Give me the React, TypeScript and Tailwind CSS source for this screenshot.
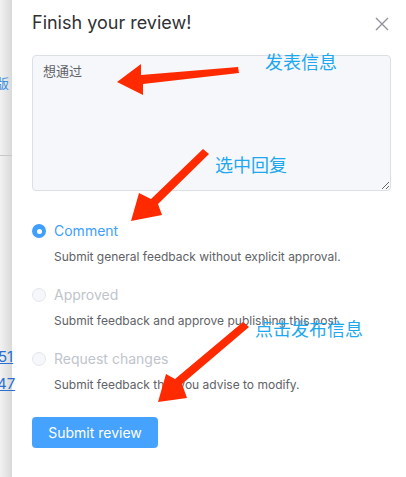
import { useState } from 'react';

interface ReviewOption {
  value: string;
  label: string;
  description: string;
  disabled?: boolean;
}

const options: ReviewOption[] = [
  { value: 'comment', label: 'Comment', description: 'Submit general feedback without explicit approval.' },
  { value: 'approved', label: 'Approved', description: 'Submit feedback and approve publishing this post.', disabled: true },
  { value: 'changes', label: 'Request changes', description: 'Submit feedback that you advise to modify.', disabled: true },
];

const font = { fontFamily: 'Inter, "Noto Sans CJK SC", sans-serif' };

export default function App() {
  const [selected, setSelected] = useState('comment');

  return (
    <div className="relative flex h-[477px] w-[406px] overflow-hidden bg-white" style={font}>
      {/* page behind the drawer */}
      <div className="relative w-3 shrink-0 bg-gradient-to-r from-[#f2f2f2] to-[#d9d9d9]">
        <span className="absolute left-[-4px] top-[77px] text-[13px] leading-none text-[#3f8fe0]">版</span>
        <div className="absolute left-0 top-[155px] h-px w-3 bg-[#c8c8c8]" />
        <span className="absolute left-[-2px] top-[349px] text-[15px] leading-none text-[#2a6fd1] underline">51</span>
        <span className="absolute left-[-3px] top-[376px] text-[15px] leading-none text-[#2a6fd1] underline">47</span>
      </div>

      <div className="flex-1 pl-5 pr-[15px] pt-[12px]">
        <div className="flex items-start justify-between">
          <h2 className="text-[18px] font-normal leading-[22px] text-[#303133]">Finish your review!</h2>
          <button className="mr-[2px] mt-[5px] text-[#909399]">
            <svg width="14" height="14" viewBox="0 0 14 14" fill="none" stroke="currentColor" strokeWidth="1.4">
              <path d="M1 1 13 13M13 1 1 13" />
            </svg>
          </button>
        </div>

        <textarea
          defaultValue="想通过"
          className="mt-[21px] block h-[136px] w-[359px] resize-y rounded border border-[#dcdfe6] bg-[#f5f7fa] px-[10px] py-[5px] text-[13px] leading-5 text-[#606266] outline-none"
        />

        <div className="mt-[31px] flex flex-col gap-[21px]">
          {options.map((opt) => {
            const checked = selected === opt.value;
            return (
              <label key={opt.value} className="block cursor-pointer" onClick={() => !opt.disabled && setSelected(opt.value)}>
                <div className="flex items-center gap-[8px]">
                  <span
                    className={
                      checked
                        ? 'flex h-[14px] w-[14px] items-center justify-center rounded-full bg-[#409eff]'
                        : 'h-[14px] w-[14px] rounded-full border border-[#e4e7ed] bg-[#f5f7fa]'
                    }
                  >
                    {checked && <span className="h-[5px] w-[5px] rounded-full bg-white" />}
                  </span>
                  <span className={`text-[14px] leading-[18px] ${opt.disabled ? 'text-[#c0c4cc]' : 'text-[#409eff]'}`}>
                    {opt.label}
                  </span>
                </div>
                <p className="ml-[22px] mt-[9px] text-[12px] leading-4 text-[#606266]">{opt.description}</p>
              </label>
            );
          })}
        </div>

        <button className="mt-[24px] h-[31px] w-[126px] rounded bg-[#46a2ff] text-[14px] text-white">Submit review</button>
      </div>

      {/* annotations over the screenshot */}
      <svg className="pointer-events-none absolute inset-0" width="406" height="477" viewBox="0 0 406 477">
        <g fill="#ff2a00">
          <path d="M238 67 L239 73 L143 84 L143 95 L117 82 L141 64 L141 75 Z" />
          <path d="M203 149 L209 154 L158 204 L162 215 L131 221 L139 193 L151 199 Z" />
          <path d="M243 322 L249 327 L182 384 L187 398 L158 402 L166 374 L175 379 Z" />
        </g>
      </svg>
      <span className="pointer-events-none absolute left-[265px] top-[53px] text-[18px] leading-5 text-[#1ea8f0]">发表信息</span>
      <span className="pointer-events-none absolute left-[215px] top-[156px] text-[18px] leading-5 text-[#1ea8f0]">选中回复</span>
      <span className="pointer-events-none absolute left-[255px] top-[320px] text-[18px] leading-5 text-[#1ea8f0]">点击发布信息</span>
    </div>
  );
}
